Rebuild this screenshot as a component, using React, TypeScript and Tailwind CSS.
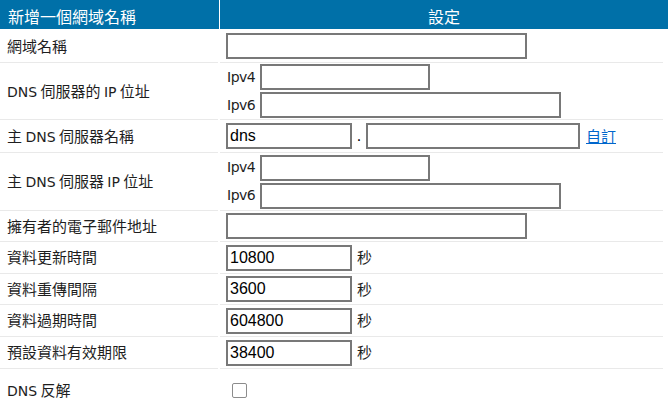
import React from "react";

const latin = "font-['DejaVu_Sans',sans-serif] text-[14px]";

const Field = ({ w, v = "" }: { w: string; v?: string }) => (
  <input
    defaultValue={v}
    className={`${w} h-[26px] box-border border-2 border-[#787878] bg-white px-[2px] text-[16px] text-black font-['Liberation_Sans',sans-serif] outline-none`}
  />
);

const Row = ({ h, label, children, last }: { h: string; label: React.ReactNode; children: React.ReactNode; last?: boolean }) => {
  const line = last ? "" : "border-b border-[#e9e9e9]";
  return (
    <div className={`flex ${h}`}>
      <div className={`w-[218px] flex items-center pl-[7px] ${line}`}>{label}</div>
      <div className={`ml-[2px] flex-1 flex flex-col justify-center pl-[6px] ${line}`}>{children}</div>
    </div>
  );
};

const IpPair = () => (
  <div className="flex flex-col gap-[2px]">
    <div className="flex items-center">
      <span className={`w-[34px] pl-px tracking-[-0.5px] ${latin}`}>Ipv4</span>
      <Field w="w-[170px]" />
    </div>
    <div className="flex items-center">
      <span className={`w-[34px] pl-px tracking-[-0.5px] ${latin}`}>Ipv6</span>
      <Field w="w-[301px]" />
    </div>
  </div>
);

const Seconds = ({ v }: { v: string }) => (
  <div className="flex items-center">
    <Field w="w-[126px]" v={v} />
    <span className="ml-[5px]">秒</span>
  </div>
);

export default function App() {
  return (
    <div className="w-[668px] h-[418px] bg-white text-[#1e1e1e] text-[15px] font-['Noto_Sans_CJK_TC',sans-serif] overflow-hidden">
      <div className="flex h-[29px] mb-px text-white text-[16px]">
        <div className="w-[219px] bg-[#0070a8] flex items-center pl-[8px] pt-[2px]">新增一個網域名稱</div>
        <div className="ml-px flex-1 bg-[#0070a8] flex items-center justify-center pt-[2px]">設定</div>
      </div>
      <div className="w-[663px]">
        <Row h="h-[33px]" label="網域名稱">
          <Field w="w-[301px]" />
        </Row>
        <Row h="h-[57px]" label={<span>
          <span className={latin}>DNS</span> 伺服器的 <span className={latin}>IP</span> 位址
        </span>}>
          <IpPair />
        </Row>
        <Row h="h-[33px]" label={<span>主 <span className={latin}>DNS</span> 伺服器名稱</span>}>
          <div className="flex items-center">
            <Field w="w-[126px]" v="dns" />
            <span className="w-[14px] text-center text-[16px] font-['Liberation_Sans',sans-serif] text-black">.</span>
            <Field w="w-[214px]" />
            <a href="#" className="ml-[6px] text-[#0066cc] underline">自訂</a>
          </div>
        </Row>
        <Row h="h-[58px]" label={<span>主 <span className={latin}>DNS</span> 伺服器 <span className={latin}>IP</span> 位址</span>}>
          <IpPair />
        </Row>
        <Row h="h-[31px]" label="擁有者的電子郵件地址">
          <Field w="w-[301px]" />
        </Row>
        <Row h="h-[32px]" label="資料更新時間">
          <Seconds v="10800" />
        </Row>
        <Row h="h-[31px]" label="資料重傳間隔">
          <Seconds v="3600" />
        </Row>
        <Row h="h-[32px]" label="資料過期時間">
          <Seconds v="604800" />
        </Row>
        <Row h="h-[32px]" label="預設資料有效期限">
          <Seconds v="38400" />
        </Row>
        <Row h="h-[42px]" last label={<span><span className={latin}>DNS</span> 反解</span>}>
          <span className="ml-[6px] w-[15px] h-[15px] border border-[#8c8c8c] rounded-[2px] bg-white" />
        </Row>
      </div>
    </div>
  );
}
